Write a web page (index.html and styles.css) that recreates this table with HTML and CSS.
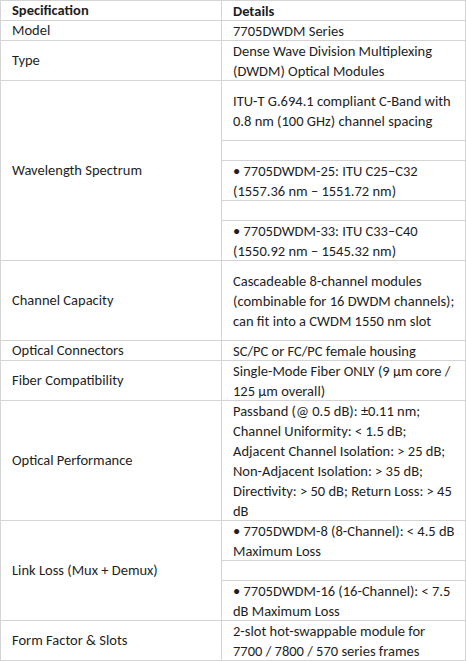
FILE: index.html
```html
<!DOCTYPE html>
<html>
<head>
<meta charset="utf-8">
<link rel="stylesheet" href="styles.css">
</head>
<body>
<div class="spec">
  <div class="row head">
    <div class="label">Specification</div>
    <div class="details"><div class="cell h1">Details</div></div>
  </div>
  <div class="row">
    <div class="label">Model</div>
    <div class="details"><div class="cell h1">7705DWDM Series</div></div>
  </div>
  <div class="row">
    <div class="label">Type</div>
    <div class="details"><div class="cell h2"><p>Dense Wave Division Multiplexing<br>(DWDM) Optical Modules</p></div></div>
  </div>
  <div class="row">
    <div class="label">Wavelength Spectrum</div>
    <div class="details">
      <div class="cell h3"><p>ITU-T G.694.1 compliant C-Band with<br>0.8 nm (100 GHz) channel spacing</p></div>
      <div class="cell h1"></div>
      <div class="cell h2"><p>• 7705DWDM-25: ITU C25–C32<br>(1557.36 nm – 1551.72 nm)</p></div>
      <div class="cell h1"></div>
      <div class="cell h2"><p>• 7705DWDM-33: ITU C33–C40<br>(1550.92 nm – 1545.32 nm)</p></div>
    </div>
  </div>
  <div class="row">
    <div class="label">Channel Capacity</div>
    <div class="details"><div class="cell h4"><p>Cascadeable 8-channel modules<br>(combinable for 16 DWDM channels);<br>can fit into a CWDM 1550 nm slot</p></div></div>
  </div>
  <div class="row">
    <div class="label">Optical Connectors</div>
    <div class="details"><div class="cell h1">SC/PC or FC/PC female housing</div></div>
  </div>
  <div class="row">
    <div class="label">Fiber Compatibility</div>
    <div class="details"><div class="cell h2"><p>Single-Mode Fiber ONLY (9 µm core /<br>125 µm overall)</p></div></div>
  </div>
  <div class="row">
    <div class="label">Optical Performance</div>
    <div class="details"><div class="cell h6"><p>Passband (@ 0.5 dB): ±0.11 nm;<br>Channel Uniformity: &lt; 1.5 dB;<br>Adjacent Channel Isolation: &gt; 25 dB;<br>Non-Adjacent Isolation: &gt; 35 dB;<br>Directivity: &gt; 50 dB; Return Loss: &gt; 45<br>dB</p></div></div>
  </div>
  <div class="row">
    <div class="label">Link Loss (Mux + Demux)</div>
    <div class="details">
      <div class="cell h2"><p>• 7705DWDM-8 (8-Channel): &lt; 4.5 dB<br>Maximum Loss</p></div>
      <div class="cell h1"></div>
      <div class="cell h2"><p>• 7705DWDM-16 (16-Channel): &lt; 7.5<br>dB Maximum Loss</p></div>
    </div>
  </div>
  <div class="row">
    <div class="label">Form Factor &amp; Slots</div>
    <div class="details"><div class="cell h2"><p>2-slot hot-swappable module for<br>7700 / 7800 / 570 series frames</p></div></div>
  </div>
</div>
</body>
</html>
```
FILE: styles.css
```css
html, body {
  margin: 0;
  padding: 0;
  background: #ffffff;
}
body {
  font-family: "Carlito", "Lato", "Liberation Sans", sans-serif;
  font-size: 14.5px;
  line-height: 20px;
  color: #1e1e1e;
}
.spec {
  width: 466px;
  box-sizing: border-box;
  display: flex;
  flex-direction: column;
  border-top: 1px solid #d4d4d4;
  border-left: 1px solid #d4d4d4;
}
.row {
  display: grid;
  grid-template-columns: 221px 244px;
}
.head {
  font-weight: bold;
}
.label {
  box-sizing: border-box;
  display: flex;
  align-items: center;
  padding-left: 11px;
  line-height: 19px;
  border-right: 1px solid #d4d4d4;
  border-bottom: 1px solid #d4d4d4;
  white-space: nowrap;
}
.details {
  display: flex;
  flex-direction: column;
}
.cell {
  box-sizing: border-box;
  display: flex;
  align-items: center;
  padding-left: 11px;
  border-right: 1px solid #d4d4d4;
  border-bottom: 1px solid #d4d4d4;
  white-space: nowrap;
}
.cell p {
  margin: 0;
}
.h1 { height: 20px; }
.h2 { height: 40px; }
.h3 { height: 60px; }
.h4 { height: 80px; }
.h6 { height: 120px; }
```
